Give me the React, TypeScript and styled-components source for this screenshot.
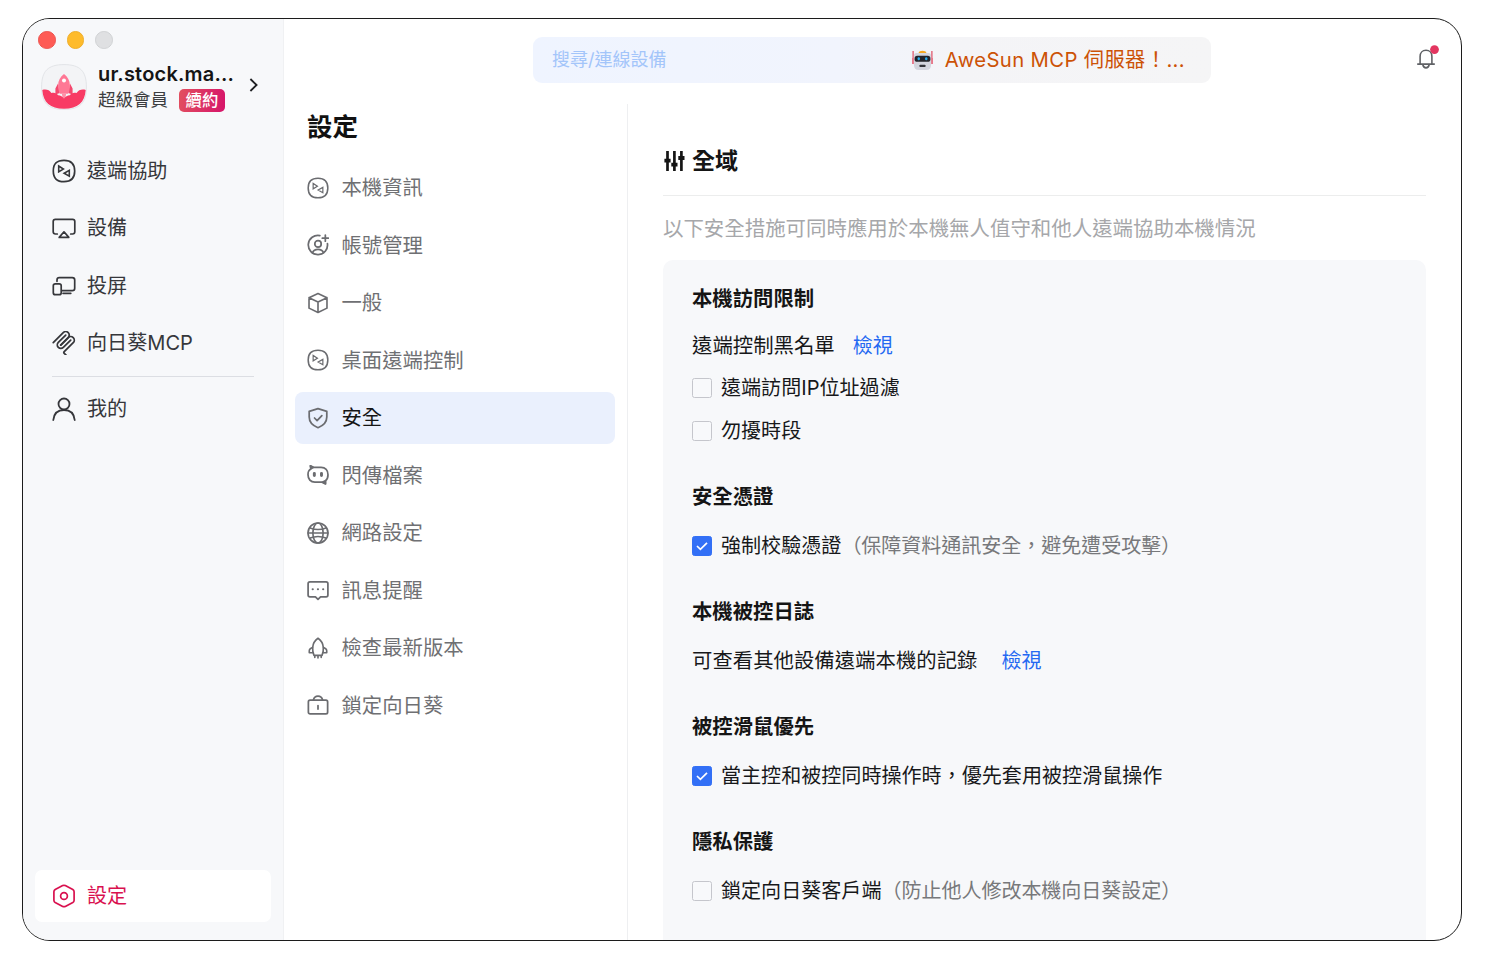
import React from "react";
import styled, { createGlobalStyle } from "styled-components";

const GlobalStyle = createGlobalStyle`
  * { box-sizing: border-box; }
  body {
    margin: 0;
    background: #fff;
    font-family: Inter, "Noto Sans CJK TC", sans-serif;
    -webkit-font-smoothing: antialiased;
  }
`;

const Page = styled.div`
  width: 1500px;
  height: 968px;
  padding: 18px 38px 27px 22px;
  background: #fff;
`;

const Window = styled.div`
  width: 1440px;
  height: 923px;
  display: flex;
  border: 1px solid #1c1c1c;
  border-radius: 28px;
  overflow: hidden;
  background: #fff;
`;

const Sidebar = styled.aside`
  width: 261px;
  flex: none;
  display: flex;
  flex-direction: column;
  background: #f7f8fa;
  border-right: 1px solid #f0f1f3;
`;

const TrafficLights = styled.div`
  display: flex;
  gap: 11px;
  padding: 12px 0 0 15px;
`;

const Light = styled.span<{ $fill: string; $edge: string }>`
  width: 17.6px;
  height: 17.6px;
  border-radius: 50%;
  background: ${(p) => p.$fill};
  border: 1px solid ${(p) => p.$edge};
`;

const Profile = styled.div`
  display: flex;
  align-items: center;
  height: 50px;
  margin: 13px 0 0 18px;
  > svg:last-child { margin-bottom: 3px; }
`;

const ProfileText = styled.div`
  width: 150px;
  margin-left: 11px;
`;

const UserName = styled.div`
  font-size: 20px;
  line-height: 26px;
  font-weight: 600;
  letter-spacing: 0.2px;
  color: #151515;
  white-space: nowrap;
`;

const Membership = styled.div`
  display: flex;
  align-items: center;
  height: 25px;
  font-size: 17.5px;
  line-height: 25px;
  color: #3c3d40;
`;

const Badge = styled.span`
  width: 46px;
  height: 23px;
  margin: 1px 0 0 11px;
  border-radius: 5px;
  background: linear-gradient(100deg, #e2505f, #d6146a);
  color: #fff;
  font-size: 16.4px;
  font-weight: 500;
  line-height: 23px;
  text-align: center;
`;

const SideNav = styled.nav`
  display: flex;
  flex-direction: column;
  flex: 1;
  padding: 30.4px 12px 18px;
`;

const SideItem = styled.div<{ $active?: boolean }>`
  display: flex;
  align-items: center;
  gap: 11px;
  height: ${(p) => (p.$active ? "52px" : "57.5px")};
  padding-left: 17px;
  border-radius: 7px;
  font-size: 20.1px;
  line-height: 30px;
  color: ${(p) => (p.$active ? "#d9114f" : "#36373b")};
  background: ${(p) => (p.$active ? "#fff" : "transparent")};
  margin-top: ${(p) => (p.$active ? "auto" : "0")};
`;

const SideDivider = styled.hr`
  width: 202px;
  height: 1px;
  margin: 4px 0 3px 17px;
  border: 0;
  background: #dcdee3;
`;

const Main = styled.div`
  flex: 1;
  display: flex;
  flex-direction: column;
  min-width: 0;
`;

const Header = styled.header`
  height: 85px;
  flex: none;
  display: flex;
  align-items: flex-start;
  padding: 18px 18px 0 249px;
`;

const SearchBar = styled.div`
  display: flex;
  align-items: center;
  width: 678px;
  height: 46px;
  padding: 0 26px 0 19px;
  border-radius: 9px;
  background: linear-gradient(90deg, #eff4ff 0%, #f1f4fd 45%, #f4f4f7 62%, #f5f5f6 100%);
`;

const Placeholder = styled.span`
  flex: 1;
  font-size: 18px;
  line-height: 26px;
  color: #a3c5fa;
`;

const Promo = styled.span`
  display: flex;
  align-items: center;
  gap: 12px;
  font-size: 20.3px;
  line-height: 30px;
  letter-spacing: 0.36px;
  color: #cc5206;
`;

const BellButton = styled.div`
  margin: 8px 0 0 auto;
  height: 28px;
`;

const Body = styled.div`
  flex: 1;
  display: flex;
  min-height: 0;
`;

const SubNav = styled.nav`
  width: 344px;
  flex: none;
  padding: 5px 12px 0 11px;
  border-right: 1px solid #eeeff1;
`;

const PageTitle = styled.h1`
  margin: 0 0 17px 12px;
  font-size: 25.5px;
  line-height: 36px;
  font-weight: 700;
  color: #111;
`;

const SubItem = styled.div<{ $active?: boolean }>`
  display: flex;
  align-items: center;
  gap: 12px;
  height: 51.5px;
  margin-bottom: 6px;
  padding-left: 12px;
  border-radius: 8px;
  font-size: 20.35px;
  line-height: 30px;
  color: ${(p) => (p.$active ? "#151515" : "#6f7073")};
  background: ${(p) => (p.$active ? "#eaf0fd" : "transparent")};
  svg { color: #6b6c70; }
  span { padding: 1px 0 0 0.5px; }
`;

const Content = styled.section`
  flex: 1;
  display: flex;
  flex-direction: column;
  min-width: 0;
  padding: 0 35px;
`;

const GroupHeader = styled.div`
  display: flex;
  align-items: center;
  gap: 7px;
  height: 92px;
  flex: none;
  padding: 22px 0 0 1px;
  border-bottom: 1px solid #eceded;
  font-size: 23px;
  line-height: 34px;
  font-weight: 700;
  color: #151515;
`;

const Hint = styled.p`
  margin: 17px 0 15px;
  font-size: 20.46px;
  line-height: 32px;
  color: #a6a7aa;
  white-space: nowrap;
`;

const Panel = styled.div`
  flex: 1;
  padding: 24px 29px 0;
  border-radius: 10px 10px 0 0;
  background: #f7f8fa;
`;

const Block = styled.div`
  margin-bottom: 30px;
`;

const BlockTitle = styled.h2`
  margin: 0 0 12px;
  font-size: 20.35px;
  line-height: 30px;
  font-weight: 700;
  color: #151515;
`;

const Row = styled.div<{ $compact?: boolean; $check?: boolean }>`
  display: flex;
  align-items: center;
  height: ${(p) => (p.$compact ? "40px" : "43px")};
  font-size: ${(p) => (p.$check ? "20.07px" : "20.4px")};
  line-height: 30px;
  color: #17181a;
  white-space: nowrap;
`;

const Link = styled.a<{ $gap: number }>`
  margin-left: ${(p) => p.$gap}px;
  font-size: 20px;
  color: #2468f2;
`;

const Note = styled.span`
  letter-spacing: -0.08px;
  color: #77787b;
`;

const Box = styled.span<{ $checked?: boolean }>`
  display: flex;
  align-items: center;
  justify-content: center;
  width: 20px;
  height: 20px;
  margin: 0 9px 0 0;
  border-radius: 2.5px;
  border: 1px solid ${(p) => (p.$checked ? "#3370f6" : "#c5c6cc")};
  background: ${(p) => (p.$checked ? "#3370f6" : "#f8f9fb")};
`;

type IconProps = { size?: number; sw?: number; children: React.ReactNode };
const Icon = ({ size = 24, sw = 1.7, children }: IconProps) => (
  <svg width={size} height={size} viewBox="0 0 24 24" fill="none" stroke="currentColor"
    strokeWidth={sw} strokeLinecap="round" strokeLinejoin="round">
    {children}
  </svg>
);

const RemoteIcon = ({ size, sw, tri = 1.5 }: { size?: number; sw?: number; tri?: number }) => (
  <Icon size={size} sw={sw}>
    <path d="M12 1.3C19.2 1.3 22.7 4.8 22.7 12S19.2 22.7 12 22.7 1.3 19.2 1.3 12 4.8 1.3 12 1.3Z" />
    <path d="M6.7 7v5.9l4.7-2.9Z M17.3 11.3v5.9l-5.2-3Z" strokeWidth={tri} strokeLinejoin="miter" />
  </Icon>
);

const DeviceIcon = () => (
  <Icon>
    <path d="M5.3 18H3.4Q1.2 18 1.2 15.8V5.6Q1.2 3.4 3.4 3.4H20.6Q22.8 3.4 22.8 5.6V15.8Q22.8 18 20.6 18H18.7" />
    <path d="M12 15.8 16.8 21.4H7.2Z" />
  </Icon>
);

const CastIcon = () => (
  <Icon>
    <path d="M5 7.3V5.9Q5 3.6 7.3 3.6H20.3Q22.7 3.6 22.7 6V14.2Q22.7 16.6 20.3 16.6H10.2" />
    <rect x="1.3" y="9.8" width="7.9" height="10.9" rx="2" />
    <path d="M11 19.3h7.8" />
  </Icon>
);

const McpIcon = () => (
  <Icon>
    <g transform="translate(-1.4 -.9) scale(.147)" strokeWidth="12">
      <path d="M18 84.85 85.88 16.97C95.25 7.6 110.45 7.6 119.82 16.97 129.2 26.34 129.2 41.54 119.82 50.91L68.56 102.18" />
      <path d="M69.27 101.47 119.82 50.91C129.2 41.54 144.39 41.54 153.77 50.91L154.12 51.27C163.49 60.64 163.49 75.83 154.12 85.21L92.72 146.6C89.6 149.72 89.6 154.79 92.72 157.91L105.33 170.52" />
      <path d="M102.85 33.94 52.65 84.15C43.28 93.52 43.28 108.71 52.65 118.09 62.02 127.46 77.22 127.46 86.59 118.09L136.79 67.88" />
    </g>
  </Icon>
);

const UserIcon = () => (
  <Icon sw={1.8}>
    <circle cx="12" cy="7" r="5.5" />
    <path d="M1.3 23C2 16.4 6 13 12 13S22 16.4 22.7 23" />
  </Icon>
);

const SettingsIcon = () => (
  <Icon sw={1.7}>
    <path d="M10.7 1.6Q12 1 13.3 1.6L20.8 5.5Q22.1 6.3 22.1 7.8V16.2Q22.1 17.7 20.8 18.5L13.3 22.4Q12 23 10.7 22.4L3.2 18.5Q1.9 17.7 1.9 16.2V7.8Q1.9 6.3 3.2 5.5Z" />
    <circle cx="12" cy="12" r="3.4" />
  </Icon>
);

const AccountIcon = () => (
  <Icon size={22} sw={1.9}>
    <path d="M14 1.7A10.5 10.5 0 1 0 22.3 10.5" />
    <circle cx="12" cy="10.8" r="3.5" />
    <path d="M6 20.4c1-2.6 3.1-3.6 6-3.6s5 1 6 3.6M20 1.2v6.6M16.7 4.5h6.6" />
  </Icon>
);

const CubeIcon = () => (
  <Icon size={22} sw={1.8}>
    <path d="M12 1.7 21.8 6.2V17.6L12 22.4 2.2 17.6V6.2Z M2.2 6.2 12 10.9 21.8 6.2 M12 10.9V22.4" />
  </Icon>
);

const ShieldIcon = () => (
  <Icon size={22} sw={1.9}>
    <path d="M12 1.8 21.6 4.7V11C21.6 16.5 17.8 20.4 12 22.6 6.2 20.4 2.4 16.5 2.4 11V4.7Z" />
    <path d="m8.2 12 2.8 2.8 5.2-5.4" />
  </Icon>
);

const FlashIcon = () => (
  <Icon size={22} sw={1.9}>
    <path d="M4.2 5.3 3.7 2 7.2 3.6H15.4C20 3.6 22.9 6.8 22.9 11.7 22.9 14.8 21.9 17 20.2 18.2V21.8L16.4 19.8H8.6C4 19.8 1.1 16.6 1.1 11.7 1.1 8.8 2.2 6.5 4.2 5.3Z" />
    <path d="m3.8 2.1 3 1.7-2.4 1.3ZM20 21.4v-3l-3 1.2Z" fill="currentColor" />
    <path d="M8 10.2v2.4M15.8 10.2v2.4" strokeWidth="3.2" />
  </Icon>
);

const GlobeIcon = () => (
  <Icon size={22} sw={1.8}>
    <circle cx="12" cy="12" r="10.9" />
    <ellipse cx="12" cy="12" rx="5.6" ry="10.9" />
    <path d="M1.1 12H22.9M3.4 6.5Q12 10 20.6 6.5M3.4 17.5Q12 14 20.6 17.5" strokeWidth="1.6" />
  </Icon>
);

const MessageIcon = () => (
  <Icon size={22} sw={1.9}>
    <path d="M3.2 3.1H20.8Q22.8 3.1 22.8 5.1V17.4Q22.8 19.4 20.8 19.4H14.8L12 22.2 9.2 19.4H3.2Q1.2 19.4 1.2 17.4V5.1Q1.2 3.1 3.2 3.1Z" />
    <path d="M6.2 11.2h.1M11.9 11.2h.1M17.6 11.2h.1" strokeWidth="2.3" />
  </Icon>
);

const RocketIcon = () => (
  <Icon size={22} sw={1.8}>
    <path d="M7.6 20C6.4 17.5 6 14.5 6.2 11.5 6.5 7 8.8 3.6 12 1.4 15.2 3.6 17.5 7 17.8 11.5 18 14.5 17.6 17.5 16.4 20Z" />
    <path d="M6 11.3 3.6 12.8Q2.5 13.6 2.5 15V17.2H6M18 11.3 20.4 12.8Q21.5 13.6 21.5 15V17.2H18M8.5 20.4v2M12 20.4v2.4M15.5 20.4v2" />
  </Icon>
);

const LockIcon = () => (
  <Icon size={22} sw={1.9}>
    <rect x="1.5" y="6.8" width="21" height="15" rx="1.8" />
    <path d="M7 6.5C7.6 3.8 9.4 2.3 12 2.3S16.4 3.8 17 6.5M12 12.6v3.8" />
  </Icon>
);

const SlidersIcon = () => (
  <svg width="21" height="22" viewBox="0 0 21 22" fill="none" stroke="currentColor" strokeWidth="2.7">
    <path d="M3.5 1v20M10.4 1v20M17.4 1v20" />
    <path d="M.4 10.7h6.2M7.3 14.7h6.2M14.3 8h6.2" strokeWidth="3.8" />
  </svg>
);

const ChevronIcon = () => (
  <svg width="11" height="14" viewBox="0 0 11 14" fill="none" stroke="#202124" strokeWidth="1.8">
    <path d="m2.4 1 6.2 6-6.2 6" />
  </svg>
);

const CheckIcon = () => (
  <svg width="14" height="12" viewBox="0 0 14 12" fill="none" stroke="#fff" strokeWidth="1.7">
    <path d="m2 6 3.4 3.3L12 2.8" />
  </svg>
);

const BellIcon = () => (
  <svg width="28" height="28" viewBox="0 0 28 28" fill="none" stroke="#606266" strokeWidth="1.6">
    <path d="M5.1 19V11.5C5.1 7.8 7.5 5.3 11 5.3s5.9 2.5 5.9 6.2V19M2.2 19.1h17.6M7.8 19.5c.4 2.3 1.5 3.4 3.2 3.4s2.8-1.1 3.2-3.4" />
    <circle cx="19.5" cy="4.6" r="4.4" fill="#e33660" stroke="none" />
  </svg>
);

const Avatar = () => (
  <svg width="46" height="46" viewBox="0 0 46 46">
    <path d="M23 .6C39 .6 45.4 7 45.4 23S39 45.4 23 45.4.6 39 .6 23 7 .6 23 .6Z" fill="#f3f4f6" stroke="#e2e4e7" />
    <path d="M17 19.4 14.4 24.6V30.6l4.4-1.6ZM29 19.4 31.6 24.6V30.6l-4.4-1.6Z" fill="#f4486e" />
    <path d="M23 10c-3.7 2.8-5.9 6.8-5.9 11.4 0 3.2.6 5.8 1.8 8.4h8.2c1.2-2.6 1.8-5.2 1.8-8.4C28.9 16.800 26.700 12.800 23 10Z" fill="#ff7895" />
    <path d="M20.800 29.800h4.400L24 36h-2Z" fill="#ff8fa6" />
    <path d="M1.300 26C5 24.900 8.500 26 10.400 28.900c3-.8 5.400.2 6.800 2.400 2.400 0 4.400 1.500 5.800 3.500 1.400-2 3.400-3.500 5.800-3.500 1.400-2.200 3.800-3.200 6.800-2.400 1.900-2.900 5.400-4 9.100-2.900C43.700 38.500 37 44.700 23 44.700S2.300 38.500 1.300 26Z" fill="#f83b64" />
    <circle cx="23" cy="16.600" r="2" fill="#fff" />
  </svg>
);

const RobotIcon = () => (
  <svg width="21" height="21" viewBox="0 0 21 21">
    <path d="M1.100 1v12M19.900 1v12" stroke="#df4c63" strokeWidth="1.200" />
    <path d="M0 8h2.500v6H0ZM18.500 8H21v6h-2.500Z" fill="#e8788a" />
    <path d="M6.800 2.500Q7.200.7 10.500.7t3.700 1.800V4H6.800Z" fill="#f6a821" />
    <path d="M1.900 6Q1.900 3 4.500 2.900h12Q19.100 3 19.100 6v8.500q0 5.500-5 5.500H6.900q-5 0-5-5.500Z" fill="#d3d5de" />
    <rect x="2.600" y="5.800" width="15.800" height="6" rx="2.600" fill="#222329" />
    <rect x="5.600" y="7.300" width="2.300" height="3" rx="1" fill="#25a9e8" />
    <rect x="13.100" y="7.300" width="2.300" height="3" rx="1" fill="#25a9e8" />
    <rect x="7.300" y="14.800" width="6.400" height="2.200" rx="1.100" fill="#33343a" />
  </svg>
);

const sideItems = [
  { label: "遠端協助", icon: <RemoteIcon sw={1.7} tri={1.6} /> },
  { label: "設備", icon: <DeviceIcon /> },
  { label: "投屏", icon: <CastIcon /> },
  { label: "向日葵MCP", icon: <McpIcon /> },
];

const subItems = [
  { label: "本機資訊", icon: <RemoteIcon size={22} tri={1.3} /> },
  { label: "帳號管理", icon: <AccountIcon /> },
  { label: "一般", icon: <CubeIcon /> },
  { label: "桌面遠端控制", icon: <RemoteIcon size={22} tri={1.3} /> },
  { label: "安全", icon: <ShieldIcon />, active: true },
  { label: "閃傳檔案", icon: <FlashIcon /> },
  { label: "網路設定", icon: <GlobeIcon /> },
  { label: "訊息提醒", icon: <MessageIcon /> },
  { label: "檢查最新版本", icon: <RocketIcon /> },
  { label: "鎖定向日葵", icon: <LockIcon /> },
];

const CheckRow = ({ label, note, checked }: { label: string; note?: string; checked?: boolean }) => (
  <Row $check>
    <Box $checked={checked}>{checked && <CheckIcon />}</Box>
    <span>{label}</span>
    {note && <Note>{note}</Note>}
  </Row>
);

export default function App() {
  return (
    <Page>
      <GlobalStyle />
      <Window>
        <Sidebar>
          <TrafficLights>
            <Light $fill="#fe5b55" $edge="#ec5550" />
            <Light $fill="#febb2b" $edge="#eeae2c" />
            <Light $fill="#dfe0e2" $edge="#d0d2d4" />
          </TrafficLights>
          <Profile>
            <Avatar />
            <ProfileText>
              <UserName>ur.stock.ma...</UserName>
              <Membership>
                超級會員<Badge>續約</Badge>
              </Membership>
            </ProfileText>
            <ChevronIcon />
          </Profile>
          <SideNav>
            {sideItems.map((it) => (
              <SideItem key={it.label}>
                {it.icon}
                <span>{it.label}</span>
              </SideItem>
            ))}
            <SideDivider />
            <SideItem>
              <UserIcon />
              <span>我的</span>
            </SideItem>
            <SideItem $active>
              <SettingsIcon />
              <span>設定</span>
            </SideItem>
          </SideNav>
        </Sidebar>
        <Main>
          <Header>
            <SearchBar>
              <Placeholder>搜尋/連線設備</Placeholder>
              <Promo>
                <RobotIcon />
                <span>AweSun MCP 伺服器！...</span>
              </Promo>
            </SearchBar>
            <BellButton>
              <BellIcon />
            </BellButton>
          </Header>
          <Body>
            <SubNav>
              <PageTitle>設定</PageTitle>
              {subItems.map((it) => (
                <SubItem key={it.label} $active={it.active}>
                  {it.icon}
                  <span>{it.label}</span>
                </SubItem>
              ))}
            </SubNav>
            <Content>
              <GroupHeader>
                <SlidersIcon />
                全域
              </GroupHeader>
              <Hint>以下安全措施可同時應用於本機無人值守和他人遠端協助本機情況</Hint>
              <Panel>
                <Block>
                  <BlockTitle>本機訪問限制</BlockTitle>
                  <Row $compact>
                    遠端控制黑名單<Link $gap={18}>檢視</Link>
                  </Row>
                  <CheckRow label="遠端訪問IP位址過濾" />
                  <CheckRow label="勿擾時段" />
                </Block>
                <Block>
                  <BlockTitle>安全憑證</BlockTitle>
                  <CheckRow checked label="強制校驗憑證" note="（保障資料通訊安全，避免遭受攻擊）" />
                </Block>
                <Block>
                  <BlockTitle>本機被控日誌</BlockTitle>
                  <Row>
                    可查看其他設備遠端本機的記錄<Link $gap={24}>檢視</Link>
                  </Row>
                </Block>
                <Block>
                  <BlockTitle>被控滑鼠優先</BlockTitle>
                  <CheckRow checked label="當主控和被控同時操作時，優先套用被控滑鼠操作" />
                </Block>
                <Block>
                  <BlockTitle>隱私保護</BlockTitle>
                  <CheckRow label="鎖定向日葵客戶端" note="（防止他人修改本機向日葵設定）" />
                </Block>
              </Panel>
            </Content>
          </Body>
        </Main>
      </Window>
    </Page>
  );
}
